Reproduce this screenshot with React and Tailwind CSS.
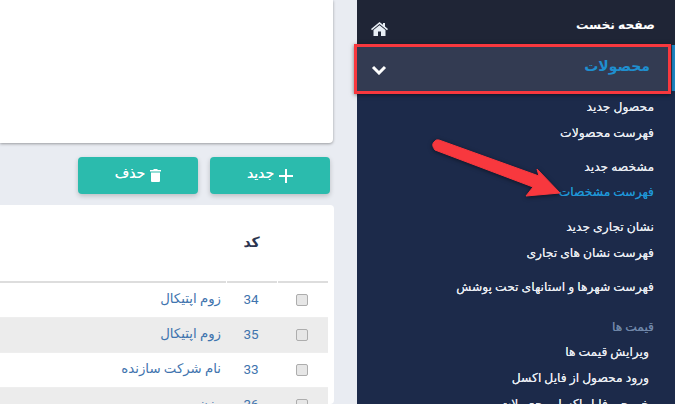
import React from 'react';

const font = 'font-["Roboto","DejaVu_Sans",sans-serif]';

const rows = [
  { id: 34, name: 'زوم اپتیکال' },
  { id: 35, name: 'زوم اپتیکال', alt: true },
  { id: 33, name: 'نام شرکت سازنده' },
  { id: 36, name: 'وزن', alt: true },
];

const subItems = [
  { label: 'محصول جدید', cls: 'h-[26px]' },
  { label: 'فهرست محصولات', cls: 'h-[26px]' },
  { label: 'مشخصه جدید', cls: 'h-[26px] mt-2' },
  { label: 'فهرست مشخصات', cls: 'h-[25px] text-[#1f95d6]' },
  { label: 'نشان تجاری جدید', cls: 'h-[26px] mt-[9px]' },
  { label: 'فهرست نشان های تجاری', cls: 'h-[26px]' },
  { label: 'فهرست شهرها و استانهای تحت پوشش', cls: 'h-[26px] mt-2' },
  { label: 'قیمت ها', cls: 'h-[26px] mt-[14px] text-[#6f86a8]' },
  { label: 'ویرایش قیمت ها', cls: 'h-[25px] pr-[5px]' },
  { label: 'ورود محصول از فایل اکسل', cls: 'h-[26px] pr-[5px]' },
  { label: 'خروجی فایل اکسل محصولات', cls: 'h-[26px] pr-[5px]' },
];

function Table() {
  return (
    <div className="w-[334px] bg-white rounded-r-sm flex-1 overflow-hidden pr-[6px]">
      <div className="h-[76px] flex">
        <div className="flex-1" />
        <div className="w-[51px] flex items-center justify-center text-[14px] font-bold text-[#2d3550] pb-[1px]">کد</div>
        <div className="w-[51px]" />
      </div>
      <div className="flex gap-[1px] h-[2px]">
        <div className="flex-1 bg-[#dddddd]" />
        <div className="w-[50px] bg-[#dddddd]" />
        <div className="w-[50px] bg-[#dddddd]" />
      </div>
      {rows.map((r) => (
        <div key={r.id} className={`flex gap-[1px] h-[35px] border-b border-[#eeeeee] text-[#3f74ae] text-[13.3px] ${r.alt ? 'bg-[#ececec]' : 'bg-white'}`}>
          <div dir="rtl" className="flex-1 flex items-center pr-[5px] pb-[2px] whitespace-nowrap">{r.name}</div>
          <div className="w-[50px] flex items-center justify-center text-[13.5px] pb-[2px] pr-[2px]">{r.id}</div>
          <div className="w-[50px] flex items-center justify-center pr-[2px]">
            <span className="w-[12px] h-[12px] rounded-[2px] border border-[#adadad] bg-[#e6e6e6]" />
          </div>
        </div>
      ))}
    </div>
  );
}

export default function App() {
  return (
    <div className={`relative w-[675px] h-[404px] overflow-hidden flex bg-[#e9ecf2] ${font}`}>
      <div className="w-[357px] flex flex-col">
        <div className="w-[333px] h-[143px] shrink-0 bg-white shadow-[0_1px_3px_rgba(0,0,0,0.35)] rounded-br-sm" />
        <div className="w-[330px] flex justify-end gap-3 mt-[14px] shrink-0">
          <button className="w-[120px] h-[37px] bg-[#2bbbad] rounded-sm shadow-[0_2px_5px_rgba(0,0,0,0.2)] text-white text-[14px] flex items-center justify-center gap-[5px] [text-shadow:0_0_0.4px_white]">
            <span className="-mt-1">حذف</span>
            <svg width="11" height="13" viewBox="0 0 11 13">
              <path d="M3.5 1 V0 H7.5 V1 H11 V2.5 H0 V1 Z M1 3.5 H10 V12 Q10 13 9 13 H2 Q1 13 1 12 Z" fill="white" />
            </svg>
          </button>
          <button className="w-[120px] h-[37px] bg-[#2bbbad] rounded-sm shadow-[0_2px_5px_rgba(0,0,0,0.2)] text-white text-[14px] flex items-center justify-center gap-[5px] [text-shadow:0_0_0.4px_white]">
            <span className="-mt-1">جدید</span>
            <svg width="14" height="14" viewBox="0 0 14 14">
              <path d="M7 0 V14 M0 7 H14" stroke="white" strokeWidth="2" />
            </svg>
          </button>
        </div>
        <div className="h-[11px] shrink-0" />
        <Table />
      </div>

      <div className="w-[318px] flex flex-col bg-[#1c2a4a]">
        <div className="h-[45px] shrink-0 bg-[#1f2536] flex items-center justify-between pr-5 pl-[14px]">
          <svg width="17" height="14" viewBox="0 0 17 14" className="mt-[12px]">
            <path d="M8.5 0 L0 7 L1 8.2 L8.5 2 L16 8.2 L17 7 L14 4.5 V1 H12 V2.8 Z M8.5 3.2 L2.5 8 V14 H7 V9.5 H10 V14 H14.5 V8 Z" fill="#e8eef5" />
          </svg>
          <span className="text-[12.3px] font-bold text-white mt-[6px]">صفحه نخست</span>
        </div>
        <div className="h-[46px] shrink-0 bg-[#333b52] border-r-[3px] border-[#1e88c7] flex items-center justify-between pl-[14px] pr-[22px]">
          <svg width="16" height="10" viewBox="0 0 16 10" className="mt-[3px]">
            <path d="M2 2 L8 8 L14 2" fill="none" stroke="white" strokeWidth="3" />
          </svg>
          <span className="text-[14px] font-bold text-[#1f8fcf] mb-1">محصولات</span>
        </div>
        <div dir="rtl" className="pt-[3px] pr-[21px] flex flex-col text-[12.3px] text-[#e8ecf2] shrink-0">
          {subItems.map((s) => (
            <div key={s.label} className={`flex items-center shrink-0 whitespace-nowrap [text-shadow:0_0_0.4px_currentColor] ${s.cls}`}>{s.label}</div>
          ))}
        </div>
      </div>

      {/* red callouts drawn over the sidebar */}
      <div className="absolute left-[354px] top-[44px] w-[317px] h-[50px] border-[3px] border-[#f8383e] shadow-[0_1px_4px_rgba(0,0,0,0.5)]" />
      <svg className="absolute left-0 top-0 pointer-events-none drop-shadow-[0_1px_2px_rgba(0,0,0,0.5)]" width="675" height="404" viewBox="0 0 675 404">
        <path d="M439 140 L539 176 L537 169 L560 193 L526 196 L533 187 L435 150 Q431 145 434 142 Q436 139 439 140 Z" fill="#f8383e" stroke="#f8383e" strokeWidth="1" strokeLinejoin="round" />
      </svg>
    </div>
  );
}
